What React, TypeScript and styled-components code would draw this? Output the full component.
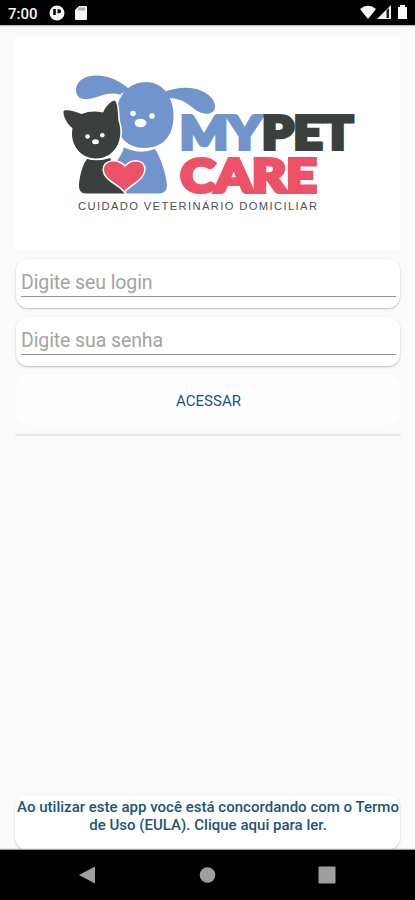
import React from "react";
import styled, { createGlobalStyle } from "styled-components";

const GlobalStyle = createGlobalStyle`
  * { box-sizing: border-box; }
  html, body { margin: 0; padding: 0; }
  body { font-family: Roboto, "Liberation Sans", sans-serif; background: #fafafa; }
`;

const Screen = styled.div`
  width: 415px;
  height: 900px;
  display: flex;
  flex-direction: column;
  background: #fafafa;
  overflow: hidden;
`;

const StatusBar = styled.header`
  height: 25px;
  flex: none;
  display: flex;
  align-items: center;
  background: #000;
  color: #f4f4f4;
  box-shadow: 0 1px 1px #bbb;
  svg { display: block; flex: none; }
`;

const Clock = styled.span`
  width: 41px;
  margin-left: 8px;
  padding-top: 3px;
  font-size: 15px;
  line-height: 20px;
  font-weight: 500;
`;

const StatusIcons = styled.div`
  display: flex;
  align-items: center;
  gap: 10px;
`;

const SignalIcons = styled.div`
  margin-right: 6px;
`;

const Spacer = styled.div`
  flex: 1;
`;

const Content = styled.main`
  flex: 1;
  min-height: 0;
  display: flex;
  flex-direction: column;
  padding: 11px 14px 0 15px;
`;

const LogoCard = styled.div`
  height: 214px;
  width: 385px;
  flex: none;
  background: #fff;
  svg { display: block; }
`;

const Field = styled.label`
  display: block;
  flex: none;
  height: 49px;
  margin: 9px 0 0 1px;
  width: 384px;
  padding: 9px 5px 0;
  border-radius: 12px;
  background: #fff;
  box-shadow: 0 1px 2px rgba(0, 0, 0, 0.25);
`;

const Input = styled.input`
  display: block;
  width: 375px;
  height: 29px;
  padding: 0;
  border: 0;
  border-bottom: 1px solid #969696;
  border-radius: 0;
  outline: 0;
  background: transparent;
  font: 400 19.5px/28px Roboto, "Liberation Sans", sans-serif;
  letter-spacing: -0.1px;
  &::placeholder { color: #a3a3a3; opacity: 1; }
`;

const ButtonArea = styled.div`
  flex: none;
  height: 61px;
  margin-top: 8px;
  border-bottom: 1px solid #e6e6e6;
  box-shadow: 0 1px 1px rgba(0, 0, 0, 0.05);
`;

const AccessButton = styled.button`
  display: block;
  width: 385px;
  height: 51px;
  padding: 2px 0 0 2px;
  border: 0;
  border-radius: 12px;
  background: #fefefe;
  color: #1c5578;
  font: 400 15px/20px Roboto, "Liberation Sans", sans-serif;
`;

const Terms = styled.a`
  display: block;
  flex: none;
  width: 385px;
  height: 54px;
  padding: 2px 0 0 1px;
  border-radius: 10px 10px 13px 13px;
  background: #fff;
  box-shadow: 0 1px 2px rgba(0, 0, 0, 0.22);
  color: #1c5578;
  font-size: 15px;
  line-height: 18px;
  font-weight: 500;
  letter-spacing: 0.02px;
  text-align: center;
  white-space: nowrap;
`;

const NavBar = styled.nav`
  height: 50px;
  flex: none;
  background: #000;
  display: flex;
  align-items: center;
  justify-content: space-between;
  padding: 0 79px 0 78px;
  position: relative;
  box-shadow: 0 -1px 1px #999;
  svg { display: block; }
`;

const Logo = () => (
  <svg width="385" height="214" viewBox="15 36 385 214" role="img" aria-label="My Pet Care">
    <g fill="#7094cb">
      <path d="M129 89C119 80 107 75 95 75.500C83 76 76 82 76 90C76 97 81 100 88 99C99 98 106 91 120 94.500Z" />
      <path d="M165 91.500C177 87 191 86 202 91C211 95 216 102 215 108C214 113 208 115 202 113C192 110 187 98 168 98Z" />
      <path d="M124 147.500Q140 155 155 149C161 158 166 174 167 185Q167 193.500 159 193.500H122L114 164Q121 157 124 147.500Z" />
      <path d="M146 82C163 82 173.500 97 173.500 116C173.500 136 163 148 144 148C127 148 116 136 116 117C116 97 128 82 146 82Z" />
      <path d="M122 146Q139 151.500 156 147.500" fill="none" stroke="#fff" strokeWidth="1.300" />
    </g>
    <g fill="#3b403f" stroke="#fff" strokeWidth="3" paintOrder="stroke" strokeLinejoin="round">
      <path d="M87 159Q99 162 110 158L117 172L125 193.500H86Q78 193.500 79 184C80 174 83 164 87 159Z" />
      <path d="M63.500 111.500C63.500 109 73 110 81.500 114Q92 110 103 112.500C106 106 110 102 114 100.500C118 101 118 115 118.500 121C121 128 121 137 118 144C114 153 106 158.500 96 158.500C82 158.500 72 147 72 134Q72 131 72.500 128C68 125 63 117 63.500 111.500Z" />
    </g>
    <path d="M124.500 191C118 183 105 180 104 170C103.500 161 117 158 125 167C133 158 145 161 144 170C143 180 130 184 124.500 191Z" fill="#ee5268" stroke="#fff" strokeWidth="3.200" paintOrder="stroke" />
    <g fill="#fff">
      <circle cx="133" cy="113.500" r="2.800" />
      <circle cx="152" cy="116" r="2.800" />
      <ellipse cx="140.500" cy="123" rx="6" ry="4.200" />
      <circle cx="87.500" cy="136.500" r="2.300" />
      <circle cx="102.300" cy="135.300" r="2.300" />
      <ellipse cx="95.500" cy="141.800" rx="3.400" ry="2.500" />
    </g>
    <g fontFamily="Lato, sans-serif" fontWeight="900" fontSize="45.500" strokeWidth="4">
      <text x="180" y="148.800" fill="#7094cb" stroke="#7094cb" textLength="81" lengthAdjust="spacingAndGlyphs">MY</text>
      <text x="262" y="148.800" fill="#3b403f" stroke="#3b403f" textLength="91" lengthAdjust="spacingAndGlyphs">PET</text>
      <text x="180.500" y="191.700" fill="#ee5268" stroke="#ee5268" textLength="136" lengthAdjust="spacingAndGlyphs">CARE</text>
    </g>
    <text x="78" y="210" fontFamily="Liberation Sans, sans-serif" fontSize="11.200" fill="#505050" textLength="239" lengthAdjust="spacing">CUIDADO VETERINÁRIO DOMICILIAR</text>
  </svg>
);

const AppMark = () => (
  <svg width="16" height="16" viewBox="0 0 16 16">
    <circle cx="8" cy="8" r="7.500" fill="#f4f4f4" />
    <path d="M5.500 4v6" stroke="#000" strokeWidth="2.600" />
    <path d="M8.500 4.200h1.500a2 2 0 0 1 0 4H8.500z" fill="#000" />
  </svg>
);

const SdCard = () => (
  <svg width="12" height="14" viewBox="0 0 12 14">
    <path d="M4 0h7q1 0 1 1v12q0 1-1 1H1q-1 0-1-1V4z" fill="#f4f4f4" />
    <path d="M4 1.500h6v3H2.500z" fill="#aaa" />
  </svg>
);

const Signals = () => (
  <svg width="49" height="15" viewBox="0 0 49 15">
    <path d="M0 4Q8 -2.500 16 4L8 14Z" fill="#fff" />
    <path d="M31 0V14H17Z" fill="#f3f3f3" />
    <path d="M26.500 5.500L29 3V13h-2.500z" fill="#222" />
    <path d="M38 2h2V0h5v2h2v12h-9z" fill="#fff" />
  </svg>
);

export default function App() {
  return (
    <>
      <GlobalStyle />
      <Screen>
        <StatusBar>
          <Clock>7:00</Clock>
          <StatusIcons>
            <AppMark />
            <SdCard />
          </StatusIcons>
          <Spacer />
          <SignalIcons><Signals /></SignalIcons>
        </StatusBar>
        <Content>
          <LogoCard><Logo /></LogoCard>
          <Field><Input placeholder="Digite seu login" /></Field>
          <Field><Input type="password" placeholder="Digite sua senha" /></Field>
          <ButtonArea><AccessButton>ACESSAR</AccessButton></ButtonArea>
          <Spacer />
          <Terms>
            Ao utilizar este app você está concordando com o Termo
            <br />
            de Uso (EULA). Clique aqui para ler.
          </Terms>
        </Content>
        <NavBar>
          <svg width="18" height="18" viewBox="0 0 18 18"><path d="M1 9L17 .5v17z" fill="#9e9e9e" /></svg>
          <svg width="18" height="18" viewBox="0 0 18 18"><circle cx="9.500" cy="9" r="7.800" fill="#9e9e9e" /></svg>
          <svg width="18" height="18" viewBox="0 0 18 18"><rect x=".5" y=".5" width="17" height="17" rx="1" fill="#9e9e9e" /></svg>
        </NavBar>
      </Screen>
    </>
  );
}
